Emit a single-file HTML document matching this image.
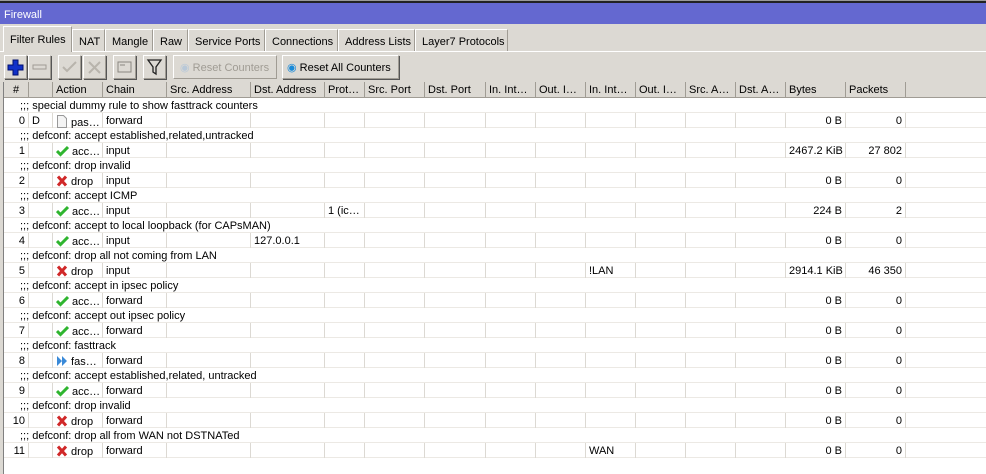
<!DOCTYPE html><html><head><style>
*{box-sizing:border-box;margin:0;padding:0}
body{width:986px;height:474px;background:#dcd9d3;font-family:"Liberation Sans",sans-serif;font-size:11px;color:#000;position:relative;overflow:hidden}
.a{position:absolute}
.tab{position:absolute;top:29px;height:22px;border:1px solid #fff;border-right-color:#a09c94;border-bottom:none;padding:6px 0 0 6px;white-space:nowrap}
.btn{position:absolute;top:55px;height:24px;border:1px solid #a09c94;border-top-color:#fff;border-left-color:#fff;box-shadow:1px 1px 0 #555}
.list{position:absolute;left:3px;top:82px;width:983px;height:392px;background:#fff;border-left:1px solid #808080}
.row{position:absolute;left:0;height:15px;width:983px;white-space:nowrap}
.c{position:absolute;top:0;height:15px;border-right:1px solid #dcd9d3;padding:2px 3px 0 3px;overflow:hidden;line-height:13px}
.hd .c{height:16px;border-right:1px solid #a09c94;padding-top:2px}
.r{text-align:right}
.cm{padding:2px 0 0 16px;line-height:13px;border-bottom:1px solid #ece9e4}
</style></head><body>
<div class="a" style="left:0;top:0;width:986px;height:1px;background:#9a9a9a"></div>
<div class="a" style="left:0;top:1px;width:986px;height:2px;background:#222"></div>
<div class="a" style="left:0;top:3px;width:986px;height:21px;background:#6468d0;color:#fff;padding:6px 0 0 4px">Firewall</div>
<div class="a" style="left:0;top:51px;width:986px;height:1px;background:#fff"></div>
<div class="tab" style="left:3px;top:26px;height:26px;width:69px;background:#dcd9d3;padding-top:7px">Filter Rules</div>
<div class="tab" style="left:72px;width:33px">NAT</div>
<div class="tab" style="left:105px;width:48px">Mangle</div>
<div class="tab" style="left:153px;width:35px">Raw</div>
<div class="tab" style="left:188px;width:77px">Service Ports</div>
<div class="tab" style="left:265px;width:73px">Connections</div>
<div class="tab" style="left:338px;width:77px">Address Lists</div>
<div class="tab" style="left:415px;width:93px">Layer7 Protocols</div>

<div class="btn" style="left:4px;width:23px"><svg width="21" height="22"><path d="M8 4h5v5h5v5h-5v5H8v-5H3V9h5z" fill="#1030c8" stroke="#001070"/></svg></div>
<div class="btn" style="left:28px;width:23px"><svg width="21" height="22"><rect x="4" y="9" width="13" height="4" fill="#dcd9d3" stroke="#a09c94"/></svg></div>
<div class="btn" style="left:58px;width:23px"><svg width="21" height="22"><path d="M4 11l4 4 9-9" fill="none" stroke="#b8b4ac" stroke-width="2"/></svg></div>
<div class="btn" style="left:83px;width:23px"><svg width="21" height="22"><path d="M5 6l11 11M16 6L5 17" stroke="#b8b4ac" stroke-width="2"/></svg></div>
<div class="btn" style="left:113px;width:23px"><svg width="21" height="22"><rect x="4" y="6" width="13" height="10" fill="none" stroke="#8a8680"/><path d="M6 9h5" stroke="#8a8680"/></svg></div>
<div class="btn" style="left:143px;width:23px"><svg width="21" height="22"><path d="M4 4h13l-5 7v7l-3-2v-5z" fill="none" stroke="#222" stroke-width="1.3"/></svg></div>
<div class="btn" style="left:173px;width:104px;color:#a09c94;padding:5px 0 0 6px;box-shadow:none"><span style="color:#b8c8d8">◉</span> Reset Counters</div>
<div class="btn" style="left:282px;width:117px;padding:5px 0 0 4px"><span style="color:#1a8ad8">◉</span> Reset All Counters</div>

<div class="list">
<div class="row hd" style="top:0;background:#dcd9d3;height:16px;border-bottom:1px solid #a09c94">
<div class="c" style="left:0;width:25px;text-align:center">#</div><div class="c" style="left:25px;width:24px"></div><div class="c" style="left:49px;width:50px">Action</div><div class="c" style="left:99px;width:64px">Chain</div><div class="c" style="left:163px;width:84px">Src. Address</div><div class="c" style="left:247px;width:74px">Dst. Address</div><div class="c" style="left:321px;width:40px">Prot…</div><div class="c" style="left:361px;width:60px">Src. Port</div><div class="c" style="left:421px;width:61px">Dst. Port</div><div class="c" style="left:482px;width:50px">In. Int…</div><div class="c" style="left:532px;width:50px">Out. I…</div><div class="c" style="left:582px;width:50px">In. Int…</div><div class="c" style="left:632px;width:50px">Out. I…</div><div class="c" style="left:682px;width:50px">Src. A…</div><div class="c" style="left:732px;width:50px">Dst. A…</div><div class="c" style="left:782px;width:60px">Bytes</div><div class="c" style="left:842px;width:60px">Packets</div>
</div>
<div id="rows"></div>
</div>
<script>
var d=[
[";;; special dummy rule to show fasttrack counters"],["0","D","doc","pas…","forward","","","","0 B","0"],
[";;; defconf: accept established,related,untracked"],["1","","ok","acc…","input","","","","2467.2 KiB","27 802"],
[";;; defconf: drop invalid"],["2","","x","drop","input","","","","0 B","0"],
[";;; defconf: accept ICMP"],["3","","ok","acc…","input","","1 (ic…","","224 B","2"],
[";;; defconf: accept to local loopback (for CAPsMAN)"],["4","","ok","acc…","input","127.0.0.1","","","0 B","0"],
[";;; defconf: drop all not coming from LAN"],["5","","x","drop","input","","","!LAN","2914.1 KiB","46 350"],
[";;; defconf: accept in ipsec policy"],["6","","ok","acc…","forward","","","","0 B","0"],
[";;; defconf: accept out ipsec policy"],["7","","ok","acc…","forward","","","","0 B","0"],
[";;; defconf: fasttrack"],["8","","ff","fas…","forward","","","","0 B","0"],
[";;; defconf: accept established,related, untracked"],["9","","ok","acc…","forward","","","","0 B","0"],
[";;; defconf: drop invalid"],["10","","x","drop","forward","","","","0 B","0"],
[";;; defconf: drop all from WAN not DSTNATed"],["11","","x","drop","forward","","","WAN","0 B","0"]];
var cols=[[0,25],[25,24],[49,50],[99,64],[163,84],[247,74],[321,40],[361,60],[421,61],[482,50],[532,50],[582,50],[632,50],[682,50],[732,50],[782,60],[842,60]];
var ic={ok:'<svg width="13" height="12" style="vertical-align:-2px"><path d="M1 6l3.5 3.5L12 2" fill="none" stroke="#2fb52f" stroke-width="3"/></svg>',
x:'<svg width="12" height="12" style="vertical-align:-2px"><path d="M2 1.5l8 9M10 1.5l-8 9" stroke="#d02828" stroke-width="3"/></svg>',
ff:'<svg width="12" height="12" style="vertical-align:-2px"><path d="M1 1l5 5L1 11zM6 1l5 5L6 11z" fill="#3a8ad8"/></svg>',
doc:'<svg width="12" height="13" style="vertical-align:-2px"><path d="M1.5 .5h6l3 3v9h-9z" fill="#f4f4f4" stroke="#999"/></svg>'};
var h='',y=16;
d.forEach(function(r){
if(r.length==1){h+='<div class="row cm" style="top:'+y+'px">'+r[0]+'</div>';}
else{var v=["","","","","","","","","","","","","","","","",""];
v[0]=r[0];v[1]=r[1];v[2]=ic[r[2]]+' '+r[3];v[3]=r[4];v[5]=r[5];v[6]=r[6];v[11]=r[7];v[15]=r[8];v[16]=r[9];
h+='<div class="row" style="top:'+y+'px;border-bottom:1px solid #ece9e4">';
cols.forEach(function(c,i){h+='<div class="c'+((i==0||i>=15)?' r':'')+'" style="left:'+c[0]+'px;width:'+c[1]+'px">'+v[i]+'</div>';});
h+='</div>';}
y+=15;});
document.getElementById('rows').innerHTML=h;
</script>
</body></html>
